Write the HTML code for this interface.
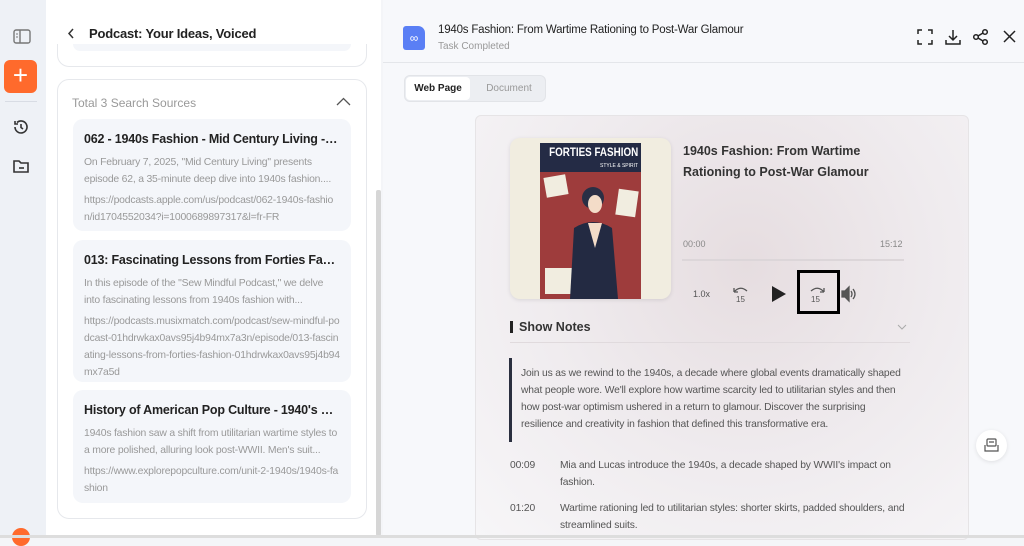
<!DOCTYPE html>
<html><head><style>
*{box-sizing:border-box;margin:0;padding:0}
body{width:1024px;height:538px;overflow:hidden;font-family:"Liberation Sans",sans-serif;background:#f4f5f8;position:relative}
.abs{position:absolute}
.side{left:0;top:0;width:46px;height:538px;background:#eef1f6}
.left{left:46px;top:0;width:335px;height:538px;background:#fff}
.right{left:383px;top:0;width:641px;height:538px;background:#f7f8fb}
.card{background:#f4f6fa;border-radius:10px;left:73px;width:278px;padding:13px 11px;overflow:hidden}
.card h4{font-size:12.5px;color:#222;font-weight:bold;white-space:nowrap;overflow:hidden;text-overflow:ellipsis;margin-bottom:8px;letter-spacing:-0.2px}
.card p{font-size:10.4px;color:#999;line-height:17px;letter-spacing:-0.2px;word-break:break-all}
.card p.d{word-break:normal;display:-webkit-box;-webkit-line-clamp:2;-webkit-box-orient:vertical;overflow:hidden}
.card .u{margin-top:4px}
.t{font-size:10.3px;color:#555;line-height:17px;letter-spacing:-0.15px}
</style></head><body>
<div class="abs side"></div>
<svg class="abs" style="left:13px;top:29px" width="18" height="16" viewBox="0 0 18 16"><rect x="1" y="1" width="16" height="13" rx="2" fill="none" stroke="#777" stroke-width="1.4"/><line x1="7" y1="1" x2="7" y2="14" stroke="#777" stroke-width="1.4"/><line x1="3" y1="5" x2="5" y2="5" stroke="#777"/><line x1="3" y1="8" x2="5" y2="8" stroke="#777"/></svg>
<div class="abs" style="left:4px;top:60px;width:33px;height:33px;background:#ff6a2c;border-radius:6px;color:#fff;font-size:26px;text-align:center;line-height:31px">+</div>
<div class="abs" style="left:5px;top:101px;width:32px;height:1px;background:#d8dce4"></div>
<svg class="abs" style="left:12px;top:118px" width="18" height="18" viewBox="0 0 18 18"><path d="M3 9a6 6 0 1 0 2-4.5M3 3v3h3" fill="none" stroke="#333" stroke-width="1.6"/><path d="M9 6v3.5l2 1.5" fill="none" stroke="#333" stroke-width="1.6"/></svg>
<svg class="abs" style="left:12px;top:158px" width="18" height="16" viewBox="0 0 18 16"><path d="M2 3h5l2 2h7v9H2z" fill="none" stroke="#333" stroke-width="1.6"/><line x1="7" y1="10" x2="12" y2="10" stroke="#333" stroke-width="1.6"/></svg>
<div class="abs" style="left:12px;top:528px;width:18px;height:18px;border-radius:50%;background:#ff6a2c"></div>

<div class="abs left"></div>
<svg class="abs" style="left:67px;top:28px" width="8" height="11"><path d="M6 1L2 5.5 6 10" fill="none" stroke="#333" stroke-width="1.5"/></svg>
<div class="abs" style="left:89px;top:26px;font-size:13px;color:#222;font-weight:bold;letter-spacing:-0.2px">Podcast: Your Ideas, Voiced</div>
<div class="abs" style="left:57px;top:44px;width:310px;height:23px;border:1px solid #e6e8ec;border-top:none;border-radius:0 0 12px 12px"></div>
<div class="abs" style="left:73px;top:44px;width:278px;height:7px;background:#f4f6fa;border-radius:0 0 8px 8px"></div>
<div class="abs" style="left:57px;top:79px;width:310px;height:440px;border:1px solid #e6e8ec;border-radius:12px"></div>
<div class="abs" style="left:72px;top:96px;font-size:12px;color:#999">Total 3 Search Sources</div>
<svg class="abs" style="left:336px;top:97px" width="15" height="9"><path d="M1 8l6.5-6.5L14 8" fill="none" stroke="#555" stroke-width="1.3"/></svg>
<div class="abs card" style="top:119px;height:112px"><h4>062 - 1940s Fashion - Mid Century Living - Ap...</h4><p class="d">On February 7, 2025, "Mid Century Living" presents episode 62, a 35-minute deep dive into 1940s fashion....</p><p class="u">https://podcasts.apple.com/us/podcast/062-1940s-fashion/id1704552034?i=1000689897317&amp;l=fr-FR</p></div>
<div class="abs card" style="top:240px;height:142px"><h4>013: Fascinating Lessons from Forties Fashion ...</h4><p class="d">In this episode of the "Sew Mindful Podcast," we delve into fascinating lessons from 1940s fashion with...</p><p class="u">https://podcasts.musixmatch.com/podcast/sew-mindful-podcast-01hdrwkax0avs95j4b94mx7a3n/episode/013-fascinating-lessons-from-forties-fashion-01hdrwkax0avs95j4b94mx7a5d</p></div>
<div class="abs card" style="top:390px;height:113px"><h4>History of American Pop Culture - 1940's Fashi...</h4><p class="d">1940s fashion saw a shift from utilitarian wartime styles to a more polished, alluring look post-WWII. Men's suit...</p><p class="u">https://www.explorepopculture.com/unit-2-1940s/1940s-fashion</p></div>
<div class="abs" style="left:376px;top:190px;width:5px;height:346px;background:#d6d6d6;border-radius:2px"></div>

<div class="abs right"></div>
<div class="abs" style="left:383px;top:62px;width:641px;height:1px;background:#e4e6ea"></div>
<div class="abs" style="left:403px;top:26px;width:22px;height:24px;background:#5a7ff5;border-radius:3px 7px 3px 3px;color:#fff;font-size:12px;text-align:center;line-height:24px">∞</div>
<div class="abs" style="left:438px;top:24px;font-size:11.5px;color:#222;letter-spacing:-0.2px">1940s Fashion: From Wartime Rationing to Post-War Glamour</div>
<div class="abs" style="left:438px;top:41px;font-size:10px;color:#999">Task Completed</div>
<svg class="abs" style="left:916px;top:28px" width="102" height="18" viewBox="0 0 102 18" fill="none" stroke="#222" stroke-width="1.5"><path d="M2 6V2h4M12 2h4v4M16 12v4h-4M6 16H2v-4"/><path d="M37 2v10M33 8l4 4 4-4M30 12v4h14v-4"/><circle cx="60" cy="9" r="2.3"/><circle cx="69" cy="4" r="2.3"/><circle cx="69" cy="14" r="2.3"/><path d="M62 8l5-3M62 10l5 3"/><path d="M88 3l11 11M99 3L88 14"/></svg>
<div class="abs" style="left:404px;top:75px;width:142px;height:27px;background:#eceef2;border-radius:6px;border:1px solid #e2e4e8"></div>
<div class="abs" style="left:406px;top:77px;width:64px;height:23px;background:#fff;border-radius:4px;font-size:10px;font-weight:bold;color:#222;text-align:center;line-height:23px">Web Page</div>
<div class="abs" style="left:474px;top:77px;width:70px;height:23px;font-size:10px;color:#999;text-align:center;line-height:23px">Document</div>

<div class="abs" style="left:475px;top:115px;width:494px;height:425px;border:1px solid #e6e4e6;border-radius:6px;background:radial-gradient(ellipse at 55% 35%,#e6dde0 0%,#efebee 50%,#f7f6f8 100%)"></div>
<div class="abs" style="left:510px;top:138px;width:161px;height:161px;background:#f1ede0;border-radius:10px;box-shadow:0 1px 4px rgba(0,0,0,.1);overflow:hidden"></div>
<div class="abs" style="left:540px;top:143px;width:101px;height:156px;background:#9e3c3c"></div>
<div class="abs" style="left:540px;top:143px;width:101px;height:29px;background:#242b45"></div>
<div class="abs" style="left:540px;top:145px;width:101px;color:#fff;font-size:12px;font-weight:bold;text-align:center;white-space:nowrap;transform:scaleX(.82);transform-origin:center">FORTIES FASHION</div>
<div class="abs" style="left:600px;top:163px;color:#fff;font-size:5px;white-space:nowrap">STYLE &amp; SPIRIT</div>
<div class="abs" style="left:545px;top:176px;width:22px;height:20px;background:#f1ede0;transform:rotate(-10deg)"></div>
<div class="abs" style="left:617px;top:190px;width:20px;height:26px;background:#f1ede0;transform:rotate(8deg)"></div>
<div class="abs" style="left:545px;top:268px;width:28px;height:26px;background:#f1ede0"></div>
<svg class="abs" style="left:560px;top:178px" width="70" height="121"><circle cx="33" cy="20" r="11" fill="#2a2f45"/><ellipse cx="35" cy="26" rx="7" ry="9" fill="#f3dcc8"/><path d="M10 121L14 50Q33 38 52 50L58 121Z" fill="#232a42"/><path d="M28 45L35 70L42 45Z" fill="#f3dcc8"/></svg>
<div class="abs" style="left:683px;top:141px;font-size:12.5px;font-weight:bold;color:#333;line-height:21px">1940s Fashion: From Wartime<br>Rationing to Post-War Glamour</div>
<div class="abs" style="left:683px;top:239px;font-size:9px;color:#888">00:00</div>
<div class="abs" style="left:880px;top:239px;font-size:9px;color:#888">15:12</div>
<div class="abs" style="left:682px;top:259px;width:222px;height:2px;background:#dcd6d9"></div>
<div class="abs" style="left:693px;top:289px;font-size:9px;color:#555">1.0x</div>
<svg class="abs" style="left:731px;top:284px" width="130" height="20" fill="none" stroke="#555" stroke-width="1.3"><path d="M3 8Q9 1 16 7M3 8V4M3 8h4"/><text x="5" y="18" font-size="8" fill="#555" stroke="none" font-family="Liberation Sans">15</text><path d="M41 2L55 10L41 18Z" fill="#222" stroke="none"/><path d="M93 8Q87 1 80 7M93 8V4M93 8h-4"/><text x="80" y="18" font-size="8" fill="#555" stroke="none" font-family="Liberation Sans">15</text><path d="M111 7h3l4-4v14l-4-4h-3z" fill="#555"/><path d="M120 7q2 3 0 6M122 5q4 5 0 10"/></svg>
<div class="abs" style="left:797px;top:270px;width:43px;height:44px;border:3px solid #000"></div>
<div class="abs" style="left:510px;top:321px;width:3px;height:12px;background:#222"></div>
<div class="abs" style="left:519px;top:320px;font-size:12.5px;font-weight:bold;color:#333">Show Notes</div>
<svg class="abs" style="left:897px;top:324px" width="10" height="6"><path d="M1 1l4 4 4-4" fill="none" stroke="#aaa"/></svg>
<div class="abs" style="left:510px;top:342px;width:400px;height:1px;background:#e0dadd"></div>
<div class="abs" style="left:509px;top:358px;width:3px;height:84px;background:#2a2f3f"></div>
<div class="abs t" style="left:521px;top:365px;width:388px">Join us as we rewind to the 1940s, a decade where global events dramatically shaped what people wore. We'll explore how wartime scarcity led to utilitarian styles and then how post-war optimism ushered in a return to glamour. Discover the surprising resilience and creativity in fashion that defined this transformative era.</div>
<div class="abs t" style="left:510px;top:457px">00:09</div>
<div class="abs t" style="left:560px;top:457px;width:345px">Mia and Lucas introduce the 1940s, a decade shaped by WWII's impact on fashion.</div>
<div class="abs t" style="left:510px;top:500px">01:20</div>
<div class="abs t" style="left:560px;top:500px;width:345px">Wartime rationing led to utilitarian styles: shorter skirts, padded shoulders, and streamlined suits.</div>
<div class="abs" style="left:976px;top:430px;width:31px;height:31px;border-radius:50%;background:#fff;box-shadow:0 1px 4px rgba(0,0,0,.1)"></div>
<svg class="abs" style="left:984px;top:438px" width="15" height="15" fill="none" stroke="#555" stroke-width="1.2"><rect x="3" y="1" width="9" height="7" rx="1"/><path d="M1 7v6h13V7M5 4h5"/></svg>
<div class="abs" style="left:0;top:535px;width:1024px;height:3px;background:#ddd"></div>
</body></html>
